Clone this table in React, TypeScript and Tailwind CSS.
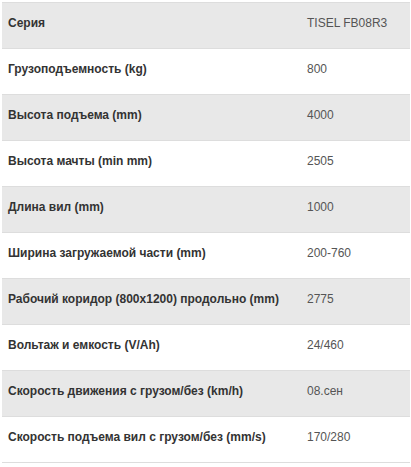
import React from "react";

const rows: [string, string][] = [
  ["Серия", "TISEL FB08R3"],
  ["Грузоподъемность (kg)", "800"],
  ["Высота подъема (mm)", "4000"],
  ["Высота мачты (min mm)", "2505"],
  ["Длина вил (mm)", "1000"],
  ["Ширина загружаемой части (mm)", "200-760"],
  ["Рабочий коридор (800x1200) продольно (mm)", "2775"],
  ["Вольтаж и емкость (V/Ah)", "24/460"],
  ["Скорость движения с грузом/без (km/h)", "08.сен"],
  ["Скорость подъема вил с грузом/без (mm/s)", "170/280"],
];

export default function App() {
  return (
    <div className="bg-white w-[411px] h-[467px] pt-[2px] pl-[2px] font-['Liberation_Sans',Arial,sans-serif] text-[12px] leading-[21px]">
      <div className="w-[408px] border-b border-[#dddddd]">
        {rows.map(([k, v], i) => (
          <div
            key={i}
            className={`flex border-t border-[#dddddd] ${i % 2 === 0 ? "bg-[#e8e8e8]" : "bg-white"}`}
          >
            <div className="w-[297px] px-[6px] pt-[10px] pb-[14px] font-bold text-[#333333] whitespace-nowrap">{k}</div>
            <div className="flex-1 px-[8px] pt-[10px] pb-[14px] text-[#555555] whitespace-nowrap">{v}</div>
          </div>
        ))}
      </div>
    </div>
  );
}
